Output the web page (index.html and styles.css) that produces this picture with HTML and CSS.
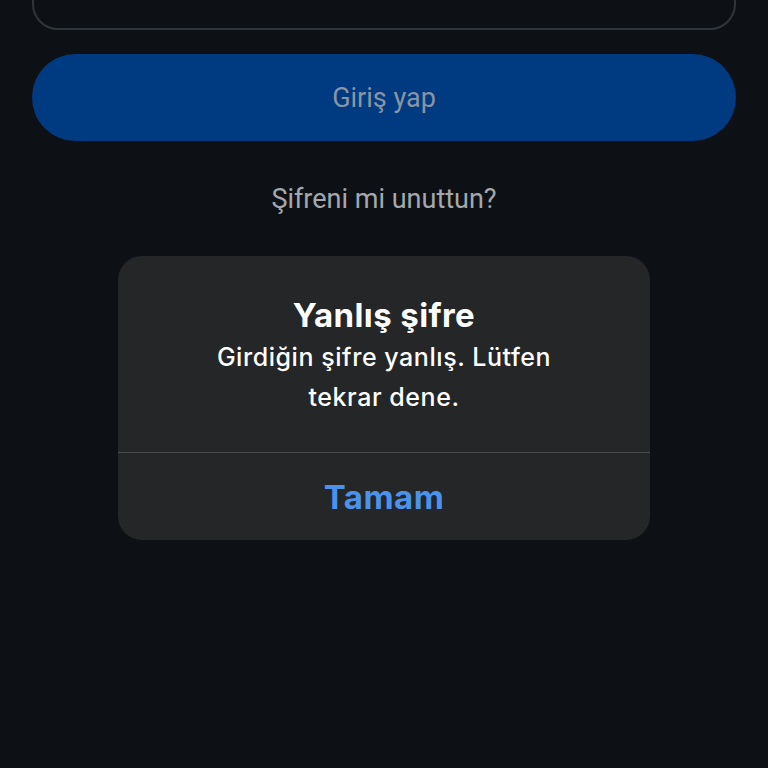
FILE: index.html
```html
<!DOCTYPE html>
<html lang="tr">
<head>
  <meta charset="UTF-8" />
  <meta name="viewport" content="width=device-width, initial-scale=1.0"/>
  <title>Giriş yap</title>
  <link rel="stylesheet" href="styles.css">
</head>
<body>
  <div class="screen">
    <div class="field"></div>
    <button class="login-btn">Giriş yap</button>
    <p class="forgot">Şifreni mi unuttun?</p>

    <div class="alert">
      <div class="alert-body">
        <h2>Yanlış şifre</h2>
        <p>Girdiğin şifre yanlış. Lütfen tekrar dene.</p>
      </div>
      <button class="alert-btn">Tamam</button>
    </div>
  </div>
</body>
</html>
```

FILE: styles.css
```css
* { margin: 0; padding: 0; box-sizing: border-box; }
html, body {
  height: 100%;
}
body {
  background: #0d1116;
  font-family: Roboto, "Noto Sans", sans-serif;
  color: #fff;
  overflow: hidden;
}
.screen {
  display: flex;
  flex-direction: column;
  align-items: center;
  padding: 0 32px;
}
.field {
  width: 100%;
  height: 90px;
  margin-top: -60px;
  border: 2px solid #30353b;
  border-radius: 26px;
}
.login-btn {
  width: 100%;
  height: 87px;
  margin-top: 24px;
  border: none;
  border-radius: 44px;
  background: #003a80;
  color: #8a94a4;
  font-family: Roboto, sans-serif;
  font-size: 27px;
}
.forgot {
  margin-top: 42px;
  font-size: 27px;
  color: #a4a8ad;
  line-height: 32px;
}
.alert {
  width: 532px;
  margin-top: 41px;
  background: #252628;
  border-radius: 24px;
  font-family: Inter, "Noto Sans", sans-serif;
  overflow: hidden;
}
.alert-body {
  padding: 40px 40px 35px;
  text-align: center;
  border-bottom: 1px solid #4a4b4e;
}
.alert-body h2 {
  font-size: 33px;
  font-weight: 700;
  letter-spacing: 0.4px;
  line-height: 38px;
}
.alert-body p {
  max-width: 380px;
  margin: 3px auto 0;
  font-size: 25px;
  font-weight: 500;
  letter-spacing: 0.55px;
  line-height: 40px;
}
.alert-btn {
  display: block;
  width: 100%;
  height: 87px;
  border: none;
  background: none;
  color: #4b92ea;
  font-family: Inter, sans-serif;
  font-size: 33px;
  font-weight: 700;
  letter-spacing: 0.5px;
}
```
